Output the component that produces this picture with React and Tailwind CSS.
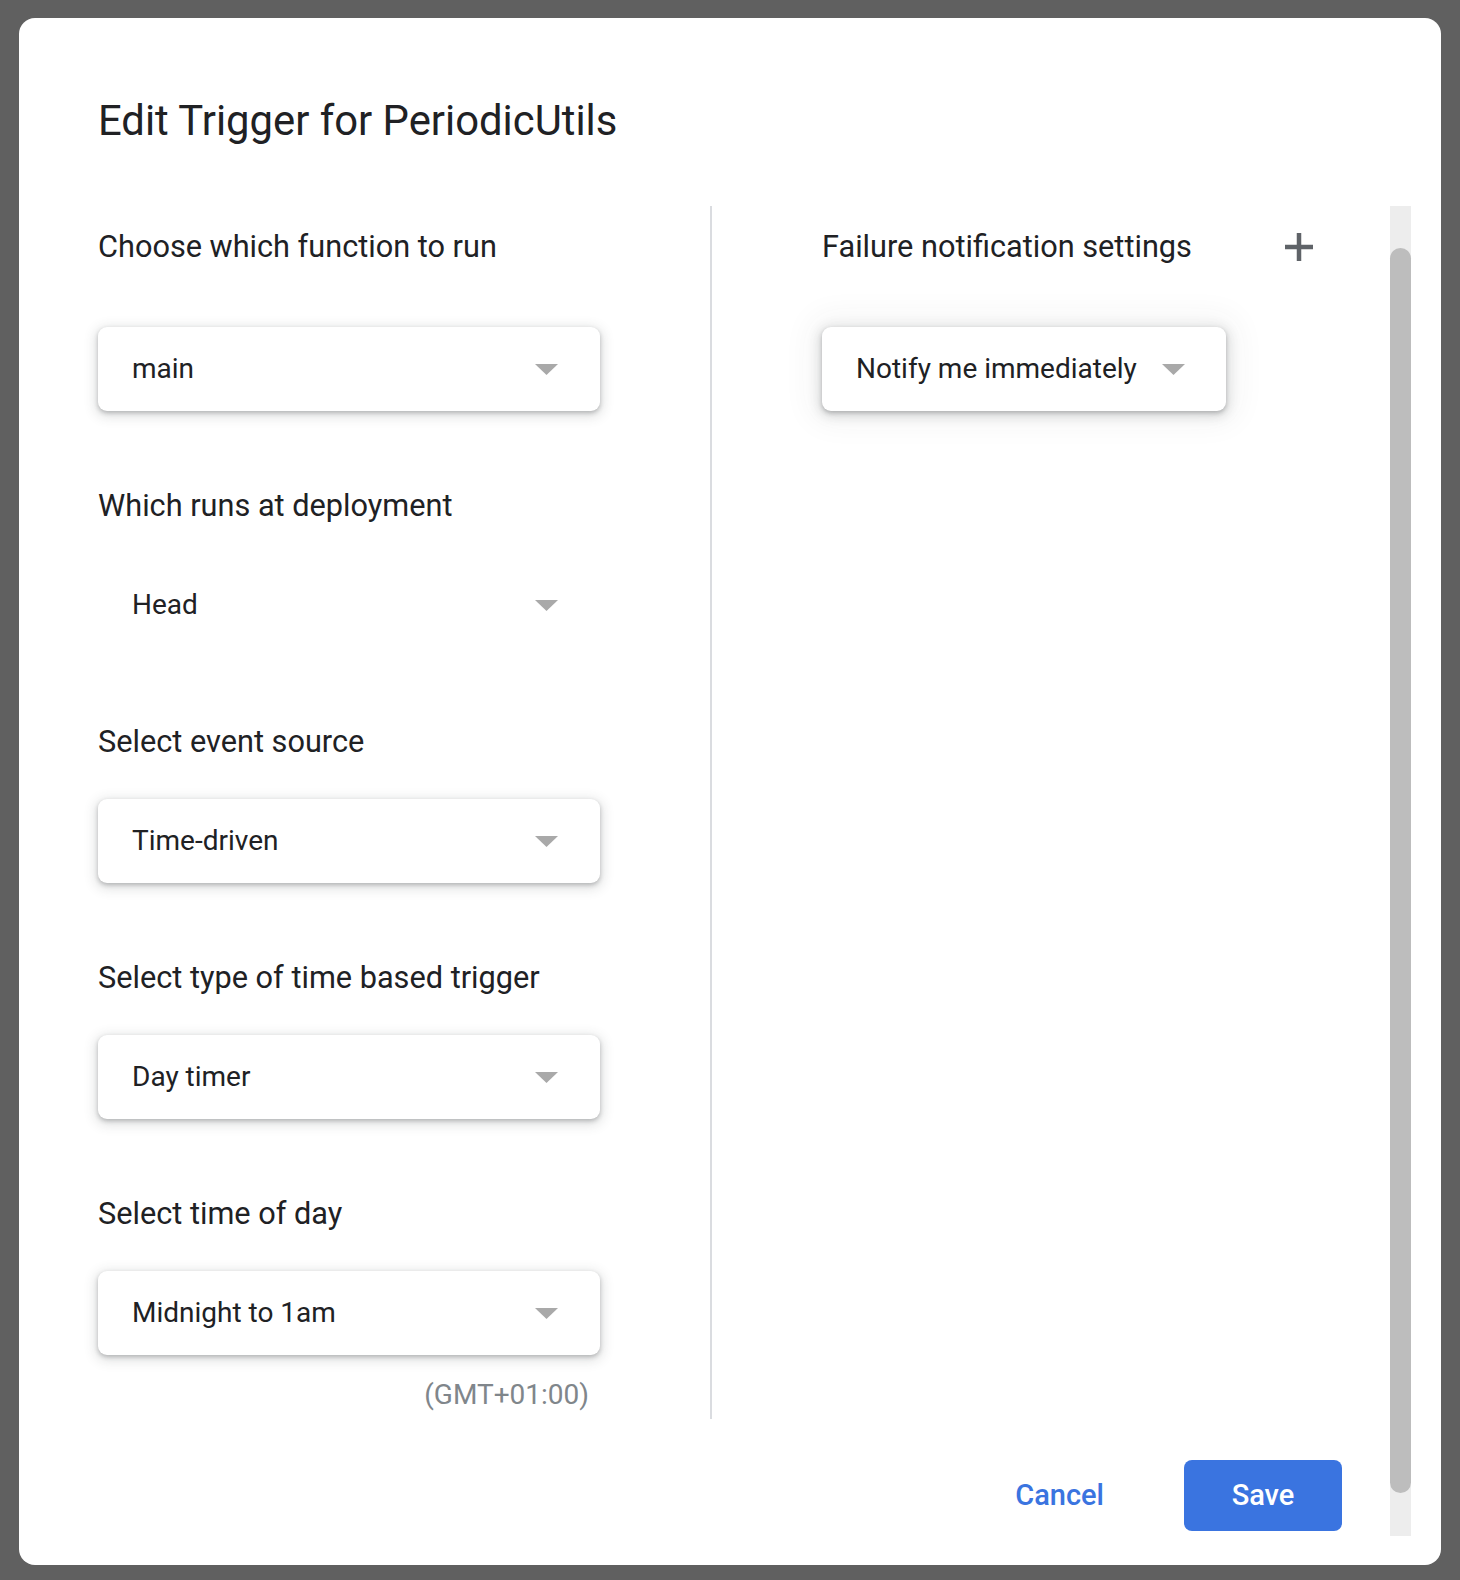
import React from "react";

const FONT = { fontFamily: "Roboto, 'Noto Sans', Arial, sans-serif" };

const boxShadow =
	"shadow-[0_2px_4px_rgba(60,64,67,0.3),0_3px_12px_3px_rgba(60,64,67,0.15)]";

function Caret() {
	return (
		<svg width="23" height="11" viewBox="0 0 23 11" className="shrink-0">
			<path d="M0 0h23L11.5 11z" fill="#a9a9a9" />
		</svg>
	);
}

function Dropdown({ value, boxed = true }) {
	return (
		<div
			className={`flex items-center justify-between w-[502px] h-[84px] pl-[34px] pr-[42px] rounded-[9px] bg-white ${
				boxed ? boxShadow : ""
			}`}
		>
			<span className="text-[28px] text-[#202124]">{value}</span>
			<Caret />
		</div>
	);
}

function Field({ label, value, boxed, first }) {
	return (
		<div className={first ? "" : "mt-[75px]"}>
			<div className="h-[40px] leading-[40px] text-[30.7px] text-[#202124]">
				{label}
			</div>
			<div className={first ? "mt-[60px]" : "mt-[37px]"}>
				<Dropdown value={value} boxed={boxed} />
			</div>
		</div>
	);
}

export default function App() {
	return (
		<div
			className="min-h-screen bg-[#606060] pt-[18px] pl-[19px] pb-[15px]"
			style={FONT}
		>
			<div className="w-[1422px] h-[1547px] bg-white rounded-[16px] flex flex-col">
				<h1 className="pl-[79px] pt-[79px] h-[127px] text-[41.8px] leading-[48px] text-[#202124]">
					Edit Trigger for PeriodicUtils
				</h1>

				<div className="mt-[61px] h-[1330px] flex">
					<div className="flex-1 flex flex-col">
						<div className="flex h-[1213px]">
							{/* left column */}
							<div className="w-[693px] pl-[79px] pt-[21px] border-r-2 border-[#dadce0]">
								<Field
									first
									label="Choose which function to run"
									value="main"
								/>
								<Field
									label="Which runs at deployment"
									value="Head"
									boxed={false}
								/>
								<Field label="Select event source" value="Time-driven" />
								<Field
									label="Select type of time based trigger"
									value="Day timer"
								/>
								<Field label="Select time of day" value="Midnight to 1am" />
								<div className="w-[502px] mt-[22px] pr-[11px] text-right text-[28px] leading-[36px] text-[#80868b]">
									(GMT+01:00)
								</div>
							</div>

							{/* right column */}
							<div className="flex-1 pl-[110px] pr-[77px] pt-[21px]">
								<div className="flex items-center justify-between h-[40px]">
									<span className="text-[30.7px] text-[#202124]">
										Failure notification settings
									</span>
									<svg width="28" height="28" viewBox="0 0 28 28">
										<path
											d="M14 0v28M0 14h28"
											stroke="#5f6368"
											strokeWidth="4.5"
										/>
									</svg>
								</div>
								<div className="mt-[60px] inline-flex items-center gap-[25px] h-[84px] pl-[34px] pr-[41px] rounded-[9px] bg-white shadow-[0_2px_4px_rgba(60,64,67,0.3),0_3px_12px_3px_rgba(60,64,67,0.15),0_0_30px_12px_rgba(60,64,67,0.05)]">
									<span className="text-[28px] text-[#202124]">
										Notify me immediately
									</span>
									<Caret />
								</div>
							</div>
						</div>

						<div className="mt-[41px] flex items-center justify-end gap-[80px] pr-[48px]">
							<button className="text-[29px] font-medium text-[#3a74e0]">
								Cancel
							</button>
							<button className="w-[158px] h-[71px] rounded-[8px] bg-[#3a74e0] text-white text-[29px] font-medium">
								Save
							</button>
						</div>
					</div>

					{/* scrollbar */}
					<div className="w-[21px] mr-[30px] bg-[#ededed] pt-[42px] pb-[43px]">
						<div className="h-full rounded-full bg-[#bdbdbd]" />
					</div>
				</div>
			</div>
		</div>
	);
}
